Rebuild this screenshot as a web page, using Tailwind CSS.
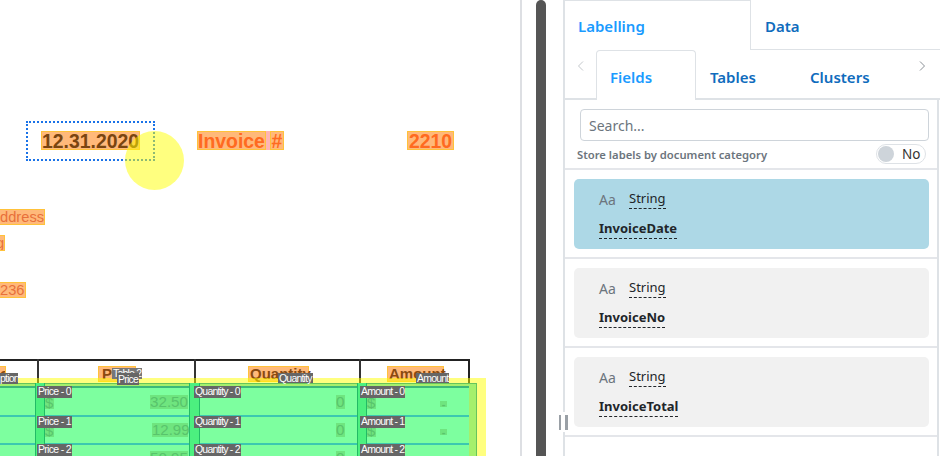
<!DOCTYPE html>
<html lang="en">
<head>
    <meta charset="UTF-8">
    <title>Labelling</title>
    <script src="https://cdn.jsdelivr.net/npm/@tailwindcss/browser@4"></script>
</head>
<body class="bg-white">
    <div class="relative flex w-[944px] h-[456px] overflow-hidden bg-white font-['Noto_Sans',sans-serif]">

        <!-- document canvas -->
        <div class="relative w-[520px] h-full shrink-0 overflow-hidden font-['Liberation_Sans',sans-serif]">
            <!-- top fields -->
            <div class="absolute left-[26px] top-[121px] w-[129px] h-[40px] border-[2px] border-dotted border-[#1a73e8]"></div>
            <span class="absolute left-[41px] top-[131px] h-[19px] w-[99px] bg-[#ffb97a] border border-[#ffc23a] text-[19.4px] leading-[18px] font-bold text-[#7a4510] text-center whitespace-nowrap">12.31.2020</span>
            <span class="absolute left-[197px] top-[131px] h-[19px] w-[69px] bg-[#ffb97a] border border-[#ffc23a] text-[19.4px] leading-[18px] font-bold text-[#ff6a20] text-center">Invoice</span>
            <span class="absolute left-[266px] top-[131px] h-[19px] w-[4px] bg-[#ffb4b4]"></span>
            <span class="absolute left-[270px] top-[131px] h-[19px] w-[14px] bg-[#ffb97a] border border-[#ffc23a] text-[19.4px] leading-[18px] font-bold text-[#ff6a20] text-center">#</span>
            <span class="absolute left-[407px] top-[131px] h-[19px] w-[47px] bg-[#ffb97a] border border-[#ffc23a] text-[19.4px] leading-[18px] font-bold text-[#ff6a20] text-center">2210</span>
            <div class="absolute left-[125px] top-[131px] w-[59px] h-[59px] rounded-full bg-[#ffff00]/50"></div>

            <span class="absolute left-0 top-[209px] h-[16px] w-[45px] bg-[#ffb97a] border border-[#ffc23a] border-l-0 text-[14.7px] leading-[15px] text-[#e8703a] text-right pr-[1px]">ddress</span>
            <span class="absolute left-0 top-[235px] h-[16px] w-[5px] overflow-hidden bg-[#ffb97a] border border-[#ffc23a] border-l-0 text-[14.7px] leading-[14px] text-[#e8703a]"><span class="relative left-[-4px]">g</span></span>
            <span class="absolute left-0 top-[282px] h-[16px] w-[26px] bg-[#ffb97a] border border-[#ffc23a] border-l-0 text-[14.7px] leading-[15px] text-[#e8703a] text-right pr-[1px]">236</span>

            <!-- table grid -->
            <div class="absolute left-0 top-[359px] w-[470px] h-[97px] border-t-2 border-r-2 border-[#222]"></div>
            <div class="absolute left-[37px] top-[359px] w-[2px] h-[97px] bg-[#333]"></div>
            <div class="absolute left-[194px] top-[359px] w-[2px] h-[97px] bg-[#333]"></div>
            <div class="absolute left-[359px] top-[359px] w-[2px] h-[97px] bg-[#333]"></div>

            <!-- header cells -->
            <span class="absolute left-0 top-[366px] h-[16px] w-[6px] overflow-hidden bg-[#ffb97a] border border-[#ffc23a] border-l-0 text-[15px] leading-[14px] font-bold text-[#8a4a10]">o</span>
            <span class="absolute left-[98px] top-[366px] h-[16px] w-[38px] bg-[#ffb97a] border border-[#ffc23a] text-[15px] leading-[14px] font-bold text-[#8a4a10] pl-[3px]">Price</span>
            <span class="absolute left-[248px] top-[366px] h-[16px] w-[61px] bg-[#ffb97a] border border-[#ffc23a] text-[15px] leading-[14px] font-bold text-[#8a4a10] pl-[1px]">Quantity</span>
            <span class="absolute left-[387px] top-[366px] h-[16px] w-[57px] bg-[#ffb97a] border border-[#ffc23a] text-[15px] leading-[14px] font-bold text-[#8a4a10] pl-[1px]">Amount</span>

            <!-- table highlight -->
            <div class="absolute left-0 top-[378px] w-[486px] h-[78px] bg-[#ffff00]/50"></div>
            <div class="absolute left-0 top-[383px] w-[477px] h-[73px] bg-[#a4f06c] border-t border-r border-[#66c45c]"></div>
            <div class="absolute left-0 top-[386px] w-[469px] h-[70px] bg-[#7dff9f]"></div>

            <!-- rows -->
            <div class="absolute left-0 top-[386px] w-[469px] h-[2px] bg-[#3cb87a]"></div>
            <div class="absolute left-0 top-[415px] w-[469px] h-[2px] bg-[#3cc8b0]"></div>
            <div class="absolute left-0 top-[443px] w-[469px] h-[2px] bg-[#3cc8b0]"></div>

            <!-- column strips -->
            <div class="absolute left-[35px] top-[383px] w-[10px] h-[73px] bg-[#4cf07f] border-x border-[#22bb66]"></div>
            <div class="absolute left-[189px] top-[383px] w-[11px] h-[73px] bg-[#4cf07f] border-x border-[#22bb66]"></div>
            <div class="absolute left-[357px] top-[383px] w-[10px] h-[73px] bg-[#4cf07f] border-x border-[#22bb66]"></div>

            <!-- cell values -->
            <span class="absolute left-[45px] top-[397px] h-[12px] w-[9px] bg-[#6fe57f] text-[15px] leading-[12px] text-[#58c46c]">$</span>
            <span class="absolute left-[150px] top-[395px] h-[14px] w-[38px] bg-[#6fe57f] text-[15.2px] leading-[14px] text-[#58c46c] text-right">32.50</span>
            <span class="absolute left-[45px] top-[425px] h-[12px] w-[9px] bg-[#6fe57f] text-[15px] leading-[12px] text-[#58c46c]">$</span>
            <span class="absolute left-[152px] top-[423px] h-[14px] w-[36px] bg-[#6fe57f] text-[15px] leading-[14px] text-[#58c46c] text-right">12.99</span>
            <span class="absolute left-[45px] top-[453px] h-[12px] w-[9px] bg-[#6fe57f] text-[15px] leading-[12px] text-[#58c46c]">$</span>
            <span class="absolute left-[150px] top-[451px] h-[14px] w-[38px] bg-[#6fe57f] text-[15.2px] leading-[14px] text-[#58c46c] text-right">50.95</span>
            <span class="absolute left-[336px] top-[395px] h-[14px] w-[9px] bg-[#6fe57f] text-[15.2px] leading-[14px] text-[#58c46c]">0</span>
            <span class="absolute left-[336px] top-[423px] h-[14px] w-[9px] bg-[#6fe57f] text-[15.2px] leading-[14px] text-[#58c46c]">0</span>
            <span class="absolute left-[336px] top-[451px] h-[14px] w-[9px] bg-[#6fe57f] text-[15.2px] leading-[14px] text-[#58c46c]">0</span>
            <span class="absolute left-[367px] top-[397px] h-[12px] w-[9px] bg-[#6fe57f] text-[15px] leading-[12px] text-[#58c46c]">$</span>
            <span class="absolute left-[367px] top-[425px] h-[12px] w-[9px] bg-[#6fe57f] text-[15px] leading-[12px] text-[#58c46c]">$</span>
            <span class="absolute left-[367px] top-[453px] h-[12px] w-[9px] bg-[#6fe57f] text-[15px] leading-[12px] text-[#58c46c]">$</span>
            <span class="absolute left-[440px] top-[401px] h-[6px] w-[7px] bg-[#6fe57f] text-[11px] font-bold leading-[6px] text-[#58c46c] text-center">-</span>
            <span class="absolute left-[440px] top-[429px] h-[6px] w-[7px] bg-[#6fe57f] text-[11px] font-bold leading-[6px] text-[#58c46c] text-center">-</span>

            <!-- overlay tags -->
            <span class="absolute left-[112px] top-[368px] h-[11px] px-[1px] bg-[#777] text-[10.5px] tracking-[-0.8px] leading-[10px] text-white whitespace-nowrap">Table 2</span>
            <span class="absolute left-[0px] top-[373px] h-[11px] w-[18px] overflow-hidden bg-[#666] text-[10.5px] tracking-[-0.8px] leading-[11px] text-white text-right">ption</span>
            <span class="absolute left-[117px] top-[373px] h-[12px] px-[1px] bg-[#666] text-[10.5px] tracking-[-0.8px] leading-[12px] text-white">Price</span>
            <span class="absolute left-[278px] top-[373px] h-[10px] px-[1px] bg-[#666] text-[10.5px] tracking-[-0.8px] leading-[10px] text-white">Quantity</span>
            <span class="absolute left-[416px] top-[373px] h-[10px] px-[1px] bg-[#666] text-[10.5px] tracking-[-0.8px] leading-[10px] text-white">Amount</span>

            <span class="absolute left-[37px] top-[386px] h-[12px] px-[1px] bg-[#666] text-[10.5px] tracking-[-0.7px] leading-[11px] text-white whitespace-nowrap">Price - 0</span>
            <span class="absolute left-[37px] top-[416px] h-[12px] px-[1px] bg-[#666] text-[10.5px] tracking-[-0.7px] leading-[11px] text-white whitespace-nowrap">Price - 1</span>
            <span class="absolute left-[37px] top-[444px] h-[12px] px-[1px] bg-[#666] text-[10.5px] tracking-[-0.7px] leading-[11px] text-white whitespace-nowrap">Price - 2</span>
            <span class="absolute left-[194px] top-[386px] h-[12px] px-[1px] bg-[#666] text-[10.5px] tracking-[-0.8px] leading-[11px] text-white whitespace-nowrap">Quantity - 0</span>
            <span class="absolute left-[194px] top-[416px] h-[12px] px-[1px] bg-[#666] text-[10.5px] tracking-[-0.8px] leading-[11px] text-white whitespace-nowrap">Quantity - 1</span>
            <span class="absolute left-[194px] top-[444px] h-[12px] px-[1px] bg-[#666] text-[10.5px] tracking-[-0.8px] leading-[11px] text-white whitespace-nowrap">Quantity - 2</span>
            <span class="absolute left-[360px] top-[386px] h-[12px] px-[1px] bg-[#666] text-[10.5px] tracking-[-0.8px] leading-[11px] text-white whitespace-nowrap">Amount - 0</span>
            <span class="absolute left-[360px] top-[416px] h-[12px] px-[1px] bg-[#666] text-[10.5px] tracking-[-0.8px] leading-[11px] text-white whitespace-nowrap">Amount - 1</span>
            <span class="absolute left-[360px] top-[444px] h-[12px] px-[1px] bg-[#666] text-[10.5px] tracking-[-0.8px] leading-[11px] text-white whitespace-nowrap">Amount - 2</span>
        </div>

        <!-- divider and scrollbar -->
        <div class="w-[2px] h-full shrink-0 bg-[#dddfe3]"></div>
        <div class="ml-[14px] w-[10px] h-full shrink-0 rounded-t-full bg-[#555555]"></div>

        <!-- right panel -->
        <div class="ml-[17px] w-[377px] h-full shrink-0 border-l-2 border-[#dee2e6] flex flex-col">
            <div class="flex h-[50px] shrink-0">
                <div class="w-[186px] pl-[13px] pt-[15px] border-t border-r border-[#dee2e6] text-[15px] leading-[20px] font-semibold text-[#1a9bff]">Labelling</div>
                <div class="flex-1 pl-[14px] pt-[16px] border-b border-[#dee2e6] text-[15px] leading-[20px] font-semibold text-[#0f6cbd]">Data</div>
            </div>
            <div class="flex h-[50px] shrink-0 border-b-2 border-[#dee2e6]">
                <div class="w-[31px] flex justify-center pt-[10px]">
                    <svg class="w-[12px] h-[12px]" viewBox="0 0 12 12" fill="none" stroke="#c4c8cc" stroke-width="1"><path d="M8 1.5 3.5 6 8 10.5"/></svg>
                </div>
                <div class="w-[100px] h-[50px] pl-[13px] pt-[16px] rounded-t-[4px] border border-b-0 border-[#dee2e6] bg-white text-[15px] leading-[20px] font-semibold text-[#1a9bff]">Fields</div>
                <div class="w-[100px] pl-[14px] pt-[17px] text-[15px] leading-[20px] font-semibold text-[#0f6cbd]">Tables</div>
                <div class="w-[106px] pl-[14px] pt-[17px] text-[15px] leading-[20px] font-semibold text-[#0f6cbd]">Clusters</div>
                <div class="flex-1 flex pt-[10px] pl-[14px]">
                    <svg class="w-[12px] h-[12px]" viewBox="0 0 12 12" fill="none" stroke="#8a9096" stroke-width="1"><path d="M4 1.5 8.5 6 4 10.5"/></svg>
                </div>
            </div>
            <div class="flex-1 mr-[1px] border-r-2 border-[#dee2e6]">
                <div class="h-[70px] border-b-2 border-[#e4e6ea] pl-[12px] pr-[11px] pt-[9px]">
                    <div class="ml-[3px] mr-[-3px] h-[32px] border border-[#ced4da] rounded-[4px] pl-[8px] text-[14px] leading-[32px] text-[#6c757d]">Search...</div>
                    <div class="flex items-center justify-between h-[20px] mt-[3px]">
                        <span class="pt-[2px] text-[11.25px] font-semibold text-[#6c757d]">Store labels by document category</span>
                        <div class="flex items-center w-[50px] h-[20px] rounded-full border border-[#dee2e6]">
                            <span class="w-[16px] h-[16px] ml-[1px] rounded-full bg-[#ced4da]"></span>
                            <span class="ml-[8px] text-[13.5px] leading-[18px] text-[#333]">No</span>
                        </div>
                    </div>
                </div>

                <div class="h-[89px] border-b-2 border-[#e4e6ea] pl-[9px] pr-[8px] pt-[9px]">
                    <div class="h-[70px] rounded-[5px] bg-[#add8e6] pl-[25px] pt-[10px]">
                        <div class="flex h-[30px] items-start">
                            <span class="w-[30px] mt-[1px] text-[14px] leading-[20px] text-[#6c757d]">Aa</span>
                            <span class="h-[20px] text-[13px] leading-[18px] text-[#212529] border-b border-dashed border-[#212529]">String</span>
                        </div>
                        <span class="block w-fit text-[13px] leading-[19px] font-bold text-[#212529] border-b border-dashed border-[#212529]">InvoiceDate</span>
                    </div>
                </div>

                <div class="h-[89px] border-b-2 border-[#e4e6ea] pl-[9px] pr-[8px] pt-[9px]">
                    <div class="h-[70px] rounded-[5px] bg-[#f1f1f1] pl-[25px] pt-[10px]">
                        <div class="flex h-[30px] items-start">
                            <span class="w-[30px] mt-[1px] text-[14px] leading-[20px] text-[#6c757d]">Aa</span>
                            <span class="h-[20px] text-[13px] leading-[18px] text-[#212529] border-b border-dashed border-[#212529]">String</span>
                        </div>
                        <span class="block w-fit text-[13px] leading-[19px] font-bold text-[#212529] border-b border-dashed border-[#212529]">InvoiceNo</span>
                    </div>
                </div>

                <div class="h-[89px] border-b-2 border-[#e4e6ea] pl-[9px] pr-[8px] pt-[9px]">
                    <div class="h-[70px] rounded-[5px] bg-[#f1f1f1] pl-[25px] pt-[10px]">
                        <div class="flex h-[30px] items-start">
                            <span class="w-[30px] mt-[1px] text-[14px] leading-[20px] text-[#6c757d]">Aa</span>
                            <span class="h-[20px] text-[13px] leading-[18px] text-[#212529] border-b border-dashed border-[#212529]">String</span>
                        </div>
                        <span class="block w-fit text-[13px] leading-[19px] font-bold text-[#212529] border-b border-dashed border-[#212529]">InvoiceTotal</span>
                    </div>
                </div>
            </div>
        </div>

        <!-- resize handle -->
        <div class="absolute left-[559px] top-[412px] w-[9px] h-[20px] flex justify-between items-center bg-white">
            <span class="w-[2px] h-[15px] bg-[#9aa0a6]"></span>
            <span class="w-[3px] h-[15px] bg-[#9aa0a6]"></span>
        </div>
    </div>
</body>
</html>
